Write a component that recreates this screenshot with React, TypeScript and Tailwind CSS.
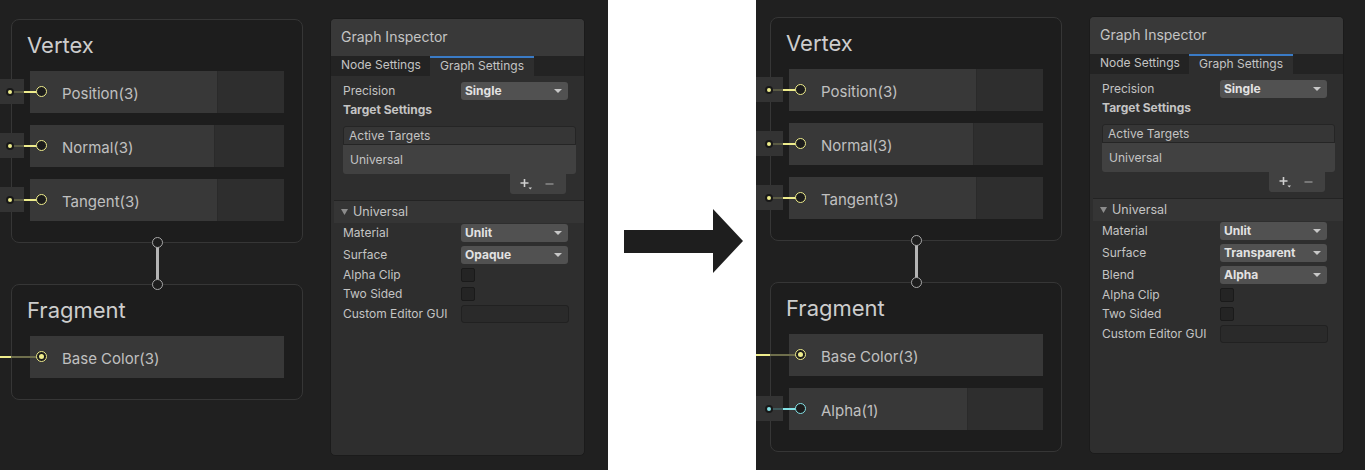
import type { ReactNode } from 'react';

type Tone = 'yellow' | 'cyan';

const tones = {
  yellow: {
    bright: 'bg-[#eeec8c]',
    dim: 'bg-[#5a5a44]',
    ring: 'border-[#eeec8c]',
  },
  cyan: {
    bright: 'bg-[#84e2e6]',
    dim: 'bg-[#3e5a5c]',
    ring: 'border-[#84e2e6]',
  },
};

function Slot({
  label,
  tone = 'yellow',
  rest,
  wired = false,
}: {
  label: string;
  tone?: Tone;
  rest?: string;
  wired?: boolean;
}) {
  const t = tones[tone];
  return (
    <div className="relative flex h-[42px]">
      <div className="flex flex-1 items-center bg-[#383838] pl-[32px] pt-[4px] text-[15px] text-[#c0c0c0]">{label}</div>
      {rest && <div className={`${rest} border-l border-[#2a2a2a] bg-[#2e2e2e]`} />}

      {wired ? (
        <>
          <div className={`absolute left-[-60px] top-[20px] h-[2px] w-[41px] ${t.bright}`} />
          <div className="absolute left-[-19px] top-[20px] h-[2px] w-[27px] bg-[#6e6e4c]" />
          <div className={`absolute left-[6px] top-[15px] flex h-[11px] w-[11px] items-center justify-center rounded-full border-[1.5px] ${t.ring} bg-[#1c1c1c]`}>
            <div className={`h-[5px] w-[5px] rounded-full ${t.bright}`} />
          </div>
        </>
      ) : (
        <>
          <div className="absolute left-[-34px] top-[8px] h-[25px] w-[28px] bg-[#333333]" />
          <div className={`absolute left-[-20px] top-[20px] h-[2px] w-[14px] ${t.dim}`} />
          <div className={`absolute left-[-6px] top-[20px] h-[2px] w-[13px] ${t.bright}`} />
          <div className="absolute left-[-24px] top-[17px] flex h-[8px] w-[8px] items-center justify-center rounded-full bg-[#181818]">
            <div className={`h-[4px] w-[4px] rounded-full ${t.bright}`} />
          </div>
          <div className={`absolute left-[6px] top-[15px] h-[11px] w-[11px] rounded-full border-[1.5px] ${t.ring} bg-[#1c1c1c]`} />
        </>
      )}
    </div>
  );
}

function Node({ title, children }: { title: string; children: ReactNode }) {
  return (
    <div className="relative w-[292px] rounded-[8px] border border-[#363636] bg-[#1d1d1d] px-[18px] pb-[21px]">
      <div className="ml-[-3px] h-[51px] pt-[12px] text-[22px] leading-[26px] text-[#cdcdcd]">{title}</div>
      <div className="flex flex-col gap-[12px]">{children}</div>
    </div>
  );
}

function Link() {
  return (
    <div className="relative flex h-[41px] w-[292px] justify-center">
      <div className="h-full w-[3px] bg-[#b4b4b4]" />
      <div className="absolute left-[141px] top-[-6px] z-10 h-[11px] w-[11px] rounded-full border-[1.5px] border-[#a8a8a8] bg-[#1d1d1d]" />
      <div className="absolute bottom-[-6px] left-[141px] z-10 h-[11px] w-[11px] rounded-full border-[1.5px] border-[#a8a8a8] bg-[#1d1d1d]" />
    </div>
  );
}

function Dropdown({ value }: { value: string }) {
  return (
    <div className="flex h-[18px] w-[107px] items-center justify-between rounded-[3px] bg-[#515151] pl-[4px] pr-[6px] text-[12px] font-bold text-[#e2e2e2]">
      {value}
      <svg width="8" height="4" viewBox="0 0 8 4">
        <path d="M0 0H8L4 4Z" fill="#c8c8c8" />
      </svg>
    </div>
  );
}

function Check() {
  return <div className="h-[14px] w-[14px] rounded-[2px] border border-[#1a1a1a] bg-[#242424]" />;
}

function Prop({ label, children, h = 'h-[18px]' }: { label: string; children: ReactNode; h?: string }) {
  return (
    <div className={`flex ${h} items-center`}>
      <div className="w-[118px] text-[12px] text-[#c4c4c4]">{label}</div>
      {children}
    </div>
  );
}

function Inspector({ after }: { after: boolean }) {
  return (
    <div
      className={`ml-[27px] flex h-[438px] w-[255px] flex-col overflow-hidden rounded-[5px] border border-[#1b1b1b] bg-[#2e2e2e] ${
        after ? 'mt-[16px]' : 'mt-[18px]'
      }`}
    >
      <div className="flex h-[37px] shrink-0 items-center bg-[#393939] px-[10px] pb-[2px] text-[14px] text-[#c4c4c4]">Graph Inspector</div>
      <div className="flex h-[20px] shrink-0 bg-[#232323] text-[12px] text-[#c4c4c4]">
        <div className="flex w-[99px] items-center pb-[2px] pl-[10px]">Node Settings</div>
        <div className="flex w-[104px] items-center border-t-2 border-[#3a7bc6] bg-[#2e2e2e] pb-[2px] pl-[10px]">Graph Settings</div>
      </div>

      <div className="flex flex-col pl-[12px] pr-[8px] pt-[6px]">
        <Prop label="Precision">
          <Dropdown value="Single" />
        </Prop>
        <div className="mt-[1px] flex h-[18px] items-center text-[12px] font-bold text-[#c4c4c4]">Target Settings</div>
        <div className="mt-[7px] flex flex-col">
          <div className="flex h-[19px] items-center rounded-t-[3px] border border-[#252525] bg-[#363636] pl-[5px] text-[12px] text-[#c4c4c4]">
            Active Targets
          </div>
          <div className="flex h-[29px] items-center rounded-b-[3px] bg-[#414141] pl-[7px] text-[12px] text-[#c4c4c4]">
            Universal
          </div>
          <div className="mr-[10px] flex h-[20px] w-[56px] items-center gap-[12px] self-end rounded-b-[3px] bg-[#414141] pl-[10px]">
            <svg width="13" height="12" viewBox="0 0 13 12">
              <path d="M4.5 1v8M0.5 5h8" stroke="#d0d0d0" strokeWidth="1.6" />
              <path d="M8.5 9.5h3.5l-1.75 2z" fill="#d0d0d0" />
            </svg>
            <svg width="9" height="10" viewBox="0 0 9 10">
              <path d="M0.5 5h8" stroke="#8a8a8a" strokeWidth="1.6" />
            </svg>
          </div>
        </div>
      </div>

      <div className="ml-[3px] mt-[6px] flex flex-col">
        <div className="flex h-[23px] items-center gap-[5px] border-t border-[#232323] bg-[#353535] pl-[7px] text-[12.5px] text-[#c4c4c4]">
          <svg width="7" height="6" viewBox="0 0 7 6">
            <path d="M0 0H7L3.5 6Z" fill="#8c8c8c" />
          </svg>
          Universal
        </div>
        <div className="flex flex-col gap-[4px] pl-[9px] pt-[1px]">
          <Prop label="Material">
            <Dropdown value="Unlit" />
          </Prop>
          <Prop label="Surface">
            <Dropdown value={after ? 'Transparent' : 'Opaque'} />
          </Prop>
          {after && (
            <Prop label="Blend">
              <Dropdown value="Alpha" />
            </Prop>
          )}
          <Prop label="Alpha Clip" h="h-[14px]">
            <Check />
          </Prop>
          <Prop label="Two Sided" h="h-[15px]">
            <Check />
          </Prop>
          <Prop label="Custom Editor GUI">
            <div className="h-[18px] w-[108px] rounded-[3px] border border-[#212121] bg-[#2a2a2a]" />
          </Prop>
        </div>
      </div>
    </div>
  );
}

function GraphPanel({ after }: { after: boolean }) {
  return (
    <div className={`flex h-full items-start overflow-hidden bg-[#202020] ${after ? 'w-[609px] pl-[3px]' : 'w-[608px]'}`}>
      <div className={`flex flex-col pl-[11px] ${after ? 'pt-[17px]' : 'pt-[19px]'}`}>
        <Node title="Vertex">
          <Slot label="Position(3)" rest="w-[67px]" />
          <Slot label="Normal(3)" rest="w-[70px]" />
          <Slot label="Tangent(3)" rest="w-[67px]" />
        </Node>
        <Link />
        <Node title="Fragment">
          <Slot label="Base Color(3)" wired />
          {after && <Slot label="Alpha(1)" tone="cyan" rest="w-[76px]" />}
        </Node>
      </div>
      <Inspector after={after} />
    </div>
  );
}

export default function App() {
  return (
    <div className="flex h-[470px] w-[1365px] overflow-hidden [font-family:Inter,'Noto_Sans',sans-serif]">
      <GraphPanel after={false} />
      <div className="flex w-[148px] items-start bg-white pl-[16px] pt-[209px]">
        <svg width="119" height="64" viewBox="0 0 119 64">
          <polygon points="0,21 89,21 89,0 119,32 89,64 89,44 0,44" fill="#1e1e1e" />
        </svg>
      </div>
      <GraphPanel after />
    </div>
  );
}
